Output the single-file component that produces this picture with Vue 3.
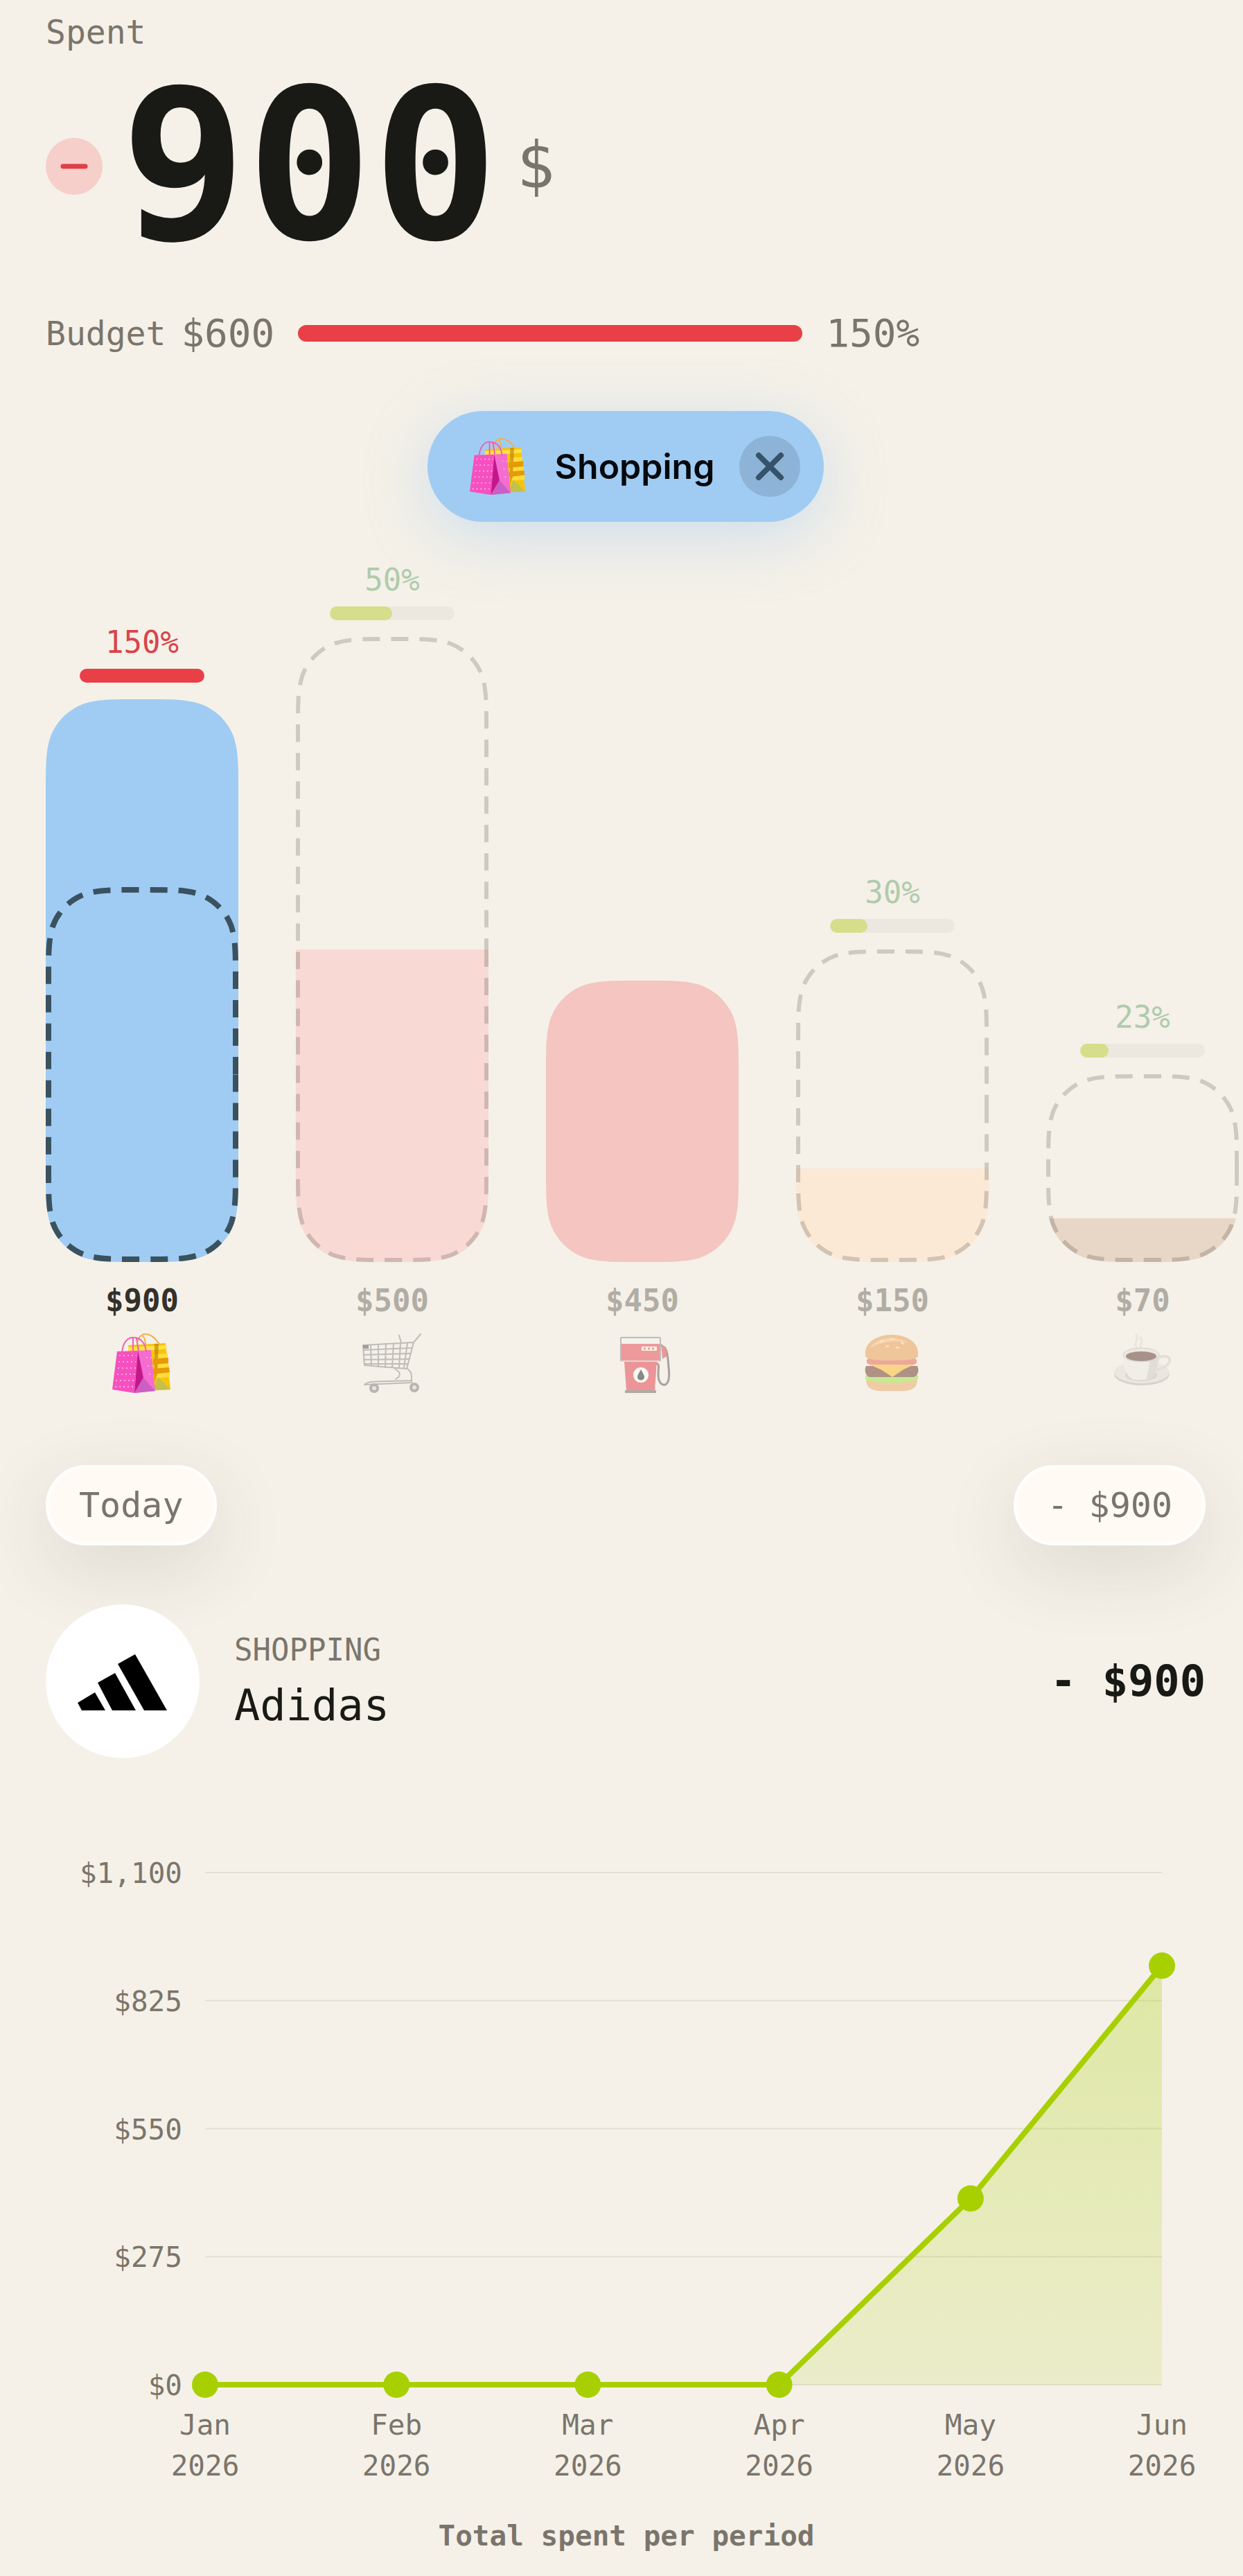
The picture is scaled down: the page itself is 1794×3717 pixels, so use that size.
<template>
  <main class="spending">
    <!-- Emoji-like symbols shared by the filter chip and the columns -->
    <svg class="sprite" aria-hidden="true">
      <symbol id="icon-shopping" viewBox="0 0 88 88">
        <path d="M38 12 C41 0 48 2 49 17 M44 3 C54 -1 64 8 69 17" fill="none" stroke="#efb04a" stroke-width="2" />
        <path d="M24 18 L78 15 L85 82 L40 84 Z" fill="#f6c40b" />
        <path d="M24 21 L62 19 L79 18 L80 23 L62 25 L24 27 Z" fill="#ffe14a" />
        <path d="M62 31 L81 30 L81 36 L62 38 Z M62 45 L82 44 L83 50 L62 52 Z M62 59 L84 57 L84 64 L63 66 Z" fill="#ffdc3a" />
        <path d="M62 16 L68 16 L66 60 L62 70 Z" fill="#b9770a" opacity="0.6" />
        <path d="M60 38 L82 36 L82 44 L60 46 Z M60 52 L83 50 L84 57 L60 60 Z" fill="#e59a08" />
        <path d="M67 64 L85 82 L60 83 Z" fill="#c3c04b" />
        <path d="M8 27 L38 26 L33 87 L1 82 Z" fill="#f650c0" />
        <path d="M38 26 L57 25 L63 84 L33 87 Z" fill="#f46dd0" />
        <path d="M38 26 L46 65 L33 87 Z" fill="#c3188c" />
        <path d="M46 65 L63 84 L33 87 Z" fill="#cb5fc4" />
        <path d="M11 33 H36 M10 42 H35 M9 51 H35 M8 60 H34 M6 69 H33 M5 78 H32 M50 36 H58 M52 48 H59 M54 60 H60" stroke="#ffa6e4" stroke-width="2" stroke-dasharray="2 4" />
        <path d="M15 32 C15 14 24 6 32 7 C42 7 49 15 50 28 M31 32 V8 M36 8 L39 26" fill="none" stroke="#f060b4" stroke-width="2" />
      </symbol>
      <symbol id="icon-groceries" viewBox="0 0 88 88">
        <g fill="none" stroke="#8b8a8c" stroke-linecap="round" stroke-linejoin="round">
          <path d="M2 18 L75 14 L65 52 L4 47 Z M85 2 L75 14 M54 4 L57 14" stroke-width="2" />
          <path d="M3 25 L73 22 M3 32 L71 30 M3 39 L69 38 M4 45 L67 45 M13 18 L14 48 M24 17 L24 49 M35 16 L34 50 M46 16 L44 50 M56 15 L54 51 M66 15 L61 51" stroke-width="2" />
          <path d="M48 52 C58 58 56 63 49 67 M66 52 C73 57 72 62 72 72 M4 75 C10 69 20 71 72 69 M4 75 L72 72" stroke-width="2" />
        </g>
        <path d="M2 18 H10 V23 H2 Z" fill="#505054" />
        <circle cx="18" cy="80" r="5" fill="#d8d8d8" stroke="#7b7a7e" stroke-width="4" />
        <circle cx="76" cy="79" r="5" fill="#d8d8d8" stroke="#7b7a7e" stroke-width="4" />
      </symbol>
      <symbol id="icon-fuel" viewBox="0 0 88 88">
        <path d="M63 44 C70 45 67 50 67 60 C67 73 73 76 77 75 C84 72 83 58 82 50 C81 38 81 28 77 22 L71 18" fill="none" stroke="#57565a" stroke-width="3" />
        <path d="M71 16 L79 24 V34 L73 38 Z" fill="#e2404d" />
        <rect x="13" y="7" width="57" height="34" rx="1" fill="#e84452" stroke="#85898c" stroke-width="2" />
        <rect x="14" y="8" width="55" height="8" fill="#f4f3f1" />
        <rect x="43" y="20" width="22" height="6" fill="#fff2df" />
        <path d="M46 23 H63" stroke="#b06860" stroke-width="3" stroke-dasharray="3 3" />
        <path d="M18 42 H65 L62 83 H21 Z" fill="#e43c4a" />
        <path d="M13 41 H70" stroke="#c3c1be" stroke-width="2" />
        <path d="M19 83 H64 V87 H19 Z" fill="#6c6764" />
        <ellipse cx="42" cy="61" rx="11" ry="11" fill="#fff" />
        <path d="M42 53 C45 59 47 61 47 64 C47 70 37 70 37 64 C37 61 39 59 42 53 Z" fill="#222" />
      </symbol>
      <symbol id="icon-food" viewBox="0 0 88 88">
        <path d="M6 68 C6 78 12 83 25 84 H61 C74 83 80 78 80 68 Z" fill="#eda765" />
        <path d="M5 62 C10 56 76 56 81 62 C82 68 78 71 73 69 C67 75 62 67 57 73 C51 75 48 69 43 73 C37 76 34 69 28 72 C22 75 19 67 13 70 C7 71 4 67 5 62 Z" fill="#98e23e" />
        <path d="M6 48 H80 C83 54 81 63 74 64 H12 C5 63 3 54 6 48 Z" fill="#6b3427" />
        <path d="M6 44 H80 L60 53 L44 64 L27 53 Z" fill="#ffb929" />
        <path d="M10 37 H76 C81 39 80 45 75 46 H11 C6 45 5 39 10 37 Z" fill="#e4624f" />
        <path d="M5 33 C3 12 24 3 43 3 C62 3 83 12 81 33 C81 38 70 40 43 40 C16 40 5 38 5 33 Z" fill="#eb9c4f" />
        <path d="M12 22 C18 8 48 2 68 15 C48 9 28 13 12 22 Z" fill="#f8bd7c" />
        <path d="M27 13 L30 12 M42 9 H45 M57 14 L60 16 M35 20 L38 19 M50 21 L53 22" stroke="#ffe0ad" stroke-width="2" stroke-linecap="round" />
      </symbol>
      <symbol id="icon-coffee" viewBox="0 0 88 88">
        <path d="M36 22 C29 15 40 12 35 3 M43 23 C37 15 47 14 41 7" fill="none" stroke="#dedbd5" stroke-width="3" stroke-linecap="round" />
        <ellipse cx="43" cy="60" rx="40" ry="16" fill="#bbb6ad" />
        <ellipse cx="43" cy="57" rx="40" ry="16" fill="#e2dfd9" />
        <ellipse cx="42" cy="61" rx="23" ry="9" fill="#c4bfb5" />
        <path d="M65 36 C83 30 88 39 79 47 C74 51 68 53 63 54" fill="none" stroke="#d5d1ca" stroke-width="4" />
        <path d="M15 32 C16 51 22 67 34 68 H49 C61 67 67 51 68 32 Z" fill="#efede9" />
        <path d="M56 36 L68 33 C67 51 60 67 49 68 Z" fill="#d0ccc4" />
        <ellipse cx="42" cy="32" rx="26" ry="10" fill="#e3e0db" stroke="#bbb7af" stroke-width="1" />
        <ellipse cx="42" cy="34" rx="22" ry="7" fill="#59362b" />
      </symbol>
    </svg>

    <header>
      <p class="label">Spent</p>
      <div class="total">
        <svg class="total-sign" viewBox="0 0 82 82" role="img" aria-label="minus">
          <circle cx="41" cy="41" r="41" fill="#f6ceca" />
          <path d="M25 41 H57" stroke="#df3f48" stroke-width="7" stroke-linecap="round" />
        </svg>
        <strong class="total-value">900</strong>
        <span class="total-currency">$</span>
      </div>
      <div class="budget">
        <span class="label">Budget</span>
        <span class="budget-value">$600</span>
        <div class="budget-track"></div>
        <span class="budget-value">150%</span>
      </div>
    </header>

    <div class="chip">
      <svg class="chip-icon" aria-hidden="true"><use href="#icon-shopping" /></svg>
      <span>Shopping</span>
      <button type="button" class="chip-close" aria-label="Clear filter">
        <svg viewBox="0 0 88 88" aria-hidden="true">
          <path d="M28 28 L60 60 M60 28 L28 60" stroke="#35536a" stroke-width="8" stroke-linecap="round" />
        </svg>
      </button>
    </div>

    <ul class="columns">
      <li
        v-for="item in columns"
        :key="item.id"
        class="column"
        :class="{ 'column--active': item.id === selected }"
      >
        <template v-if="item.budget">
          <span class="column-percent">{{ item.percent }}%</span>
          <div class="column-track">
            <div class="column-progress" :style="{ width: Math.min(item.percent, 100) + '%' }"></div>
          </div>
        </template>
        <svg
          class="column-bar"
          :viewBox="'0 0 ' + barWidth + ' ' + item.height"
          :style="{ height: item.height + 'px' }"
          aria-hidden="true"
        >
          <clipPath :id="'clip-' + item.id">
            <path :d="item.shape" />
          </clipPath>
          <rect
            :y="item.height - item.fillHeight"
            :width="barWidth"
            :height="item.fillHeight"
            :fill="item.color"
            :clip-path="'url(#clip-' + item.id + ')'"
          />
          <path v-if="item.budget" :d="item.outline" class="column-outline" />
        </svg>
        <span class="column-amount">${{ item.spent }}</span>
        <svg class="column-icon" aria-hidden="true"><use :href="'#icon-' + item.id" /></svg>
      </li>
    </ul>

    <section>
      <div class="day">
        <span class="pill">Today</span>
        <span class="pill">- $900</span>
      </div>
      <article class="transaction">
        <svg class="merchant" viewBox="0 0 222 222" role="img" aria-label="Adidas logo">
          <circle cx="111" cy="111" r="111" fill="#fff" />
          <path d="M46 142 L71 127 L86 153 H52 Z M75 113 L100 99 L130 153 H96 Z M104 86 L129 72 L175 153 H142 Z" />
        </svg>
        <div class="transaction-name">
          <span class="transaction-category">SHOPPING</span>
          <span>Adidas</span>
        </div>
        <strong>- $900</strong>
      </article>
    </section>

    <svg class="trend" viewBox="0 0 1674 1032" role="img" aria-label="Total spent per period">
      <defs>
        <linearGradient id="trend-fill" x1="0" y1="0" x2="0" y2="1">
          <stop offset="0" stop-color="#a8d000" stop-opacity="0.29" />
          <stop offset="1" stop-color="#a8d000" stop-opacity="0.13" />
        </linearGradient>
      </defs>
      <g v-for="tick in ticks" :key="tick.label">
        <line :x1="plot.left" :x2="plot.right" :y1="tick.y" :y2="tick.y" class="trend-grid" />
        <text :x="plot.left - 33" :y="tick.y + 15" text-anchor="end">{{ tick.label }}</text>
      </g>
      <path :d="area" fill="url(#trend-fill)" />
      <polyline :points="line" class="trend-line" />
      <g v-for="point in points" :key="point.month">
        <circle :cx="point.x" :cy="point.y" r="19" class="trend-dot" />
        <text :x="point.x" y="852" text-anchor="middle">{{ point.month }}</text>
        <text :x="point.x" y="911" text-anchor="middle">2026</text>
      </g>
      <text x="838" y="1012" text-anchor="middle" class="trend-title">Total spent per period</text>
    </svg>
  </main>
</template>

<script setup>
import { computed, ref } from 'vue'

const selected = ref('shopping')

const barWidth = 278
const cornerRadius = 87
const tallest = 902

const categories = [
  { id: 'shopping', spent: 900, budget: 600, color: '#a0ccf3' },
  { id: 'groceries', spent: 500, budget: 1000, color: '#f8d9d4' },
  { id: 'fuel', spent: 450, budget: 0, color: '#f4c5c1' },
  { id: 'food', spent: 150, budget: 500, color: '#fbe8d5' },
  { id: 'coffee', spent: 70, budget: 300, color: '#e8d6c6' }
]

// Rounded rect with continuous corners, drawn clockwise from the middle of the right edge
function smoothRect(x, y, w, h, r) {
  const corners = [
    [x + w, y + h, 0, -1, -1, 0],
    [x, y + h, 1, 0, 0, -1],
    [x, y, 0, 1, 1, 0],
    [x + w, y, -1, 0, 0, 1]
  ]
  let d = `M${x + w} ${y + h / 2}`
  for (const [cx, cy, ax, ay, bx, by] of corners) {
    const at = (a, b) => `${cx + r * (a * ax + b * bx)} ${cy + r * (a * ay + b * by)}`
    d += ` L${at(1.529, 0)}`
    d += ` C${at(1.088, 0)} ${at(0.868, 0)} ${at(0.631, 0.075)}`
    d += ` C${at(0.373, 0.169)} ${at(0.169, 0.373)} ${at(0.075, 0.631)}`
    d += ` C${at(0, 0.868)} ${at(0, 1.088)} ${at(0, 1.529)}`
  }
  return d + 'Z'
}

const columns = computed(() => {
  const scale = tallest / Math.max(...categories.map(c => Math.max(c.spent, c.budget)))
  return categories.map(c => {
    const height = Math.round(Math.max(c.spent, c.budget) * scale)
    const budgetHeight = Math.round(c.budget * scale)
    const inset = c.id === selected.value ? 4 : 3
    return {
      ...c,
      height,
      fillHeight: Math.round(c.spent * scale),
      percent: Math.round(c.spent / c.budget * 100),
      shape: smoothRect(0, 0, barWidth, height, cornerRadius),
      outline: smoothRect(
        inset,
        height - budgetHeight + inset,
        barWidth - inset * 2,
        budgetHeight - inset * 2,
        cornerRadius - inset
      )
    }
  })
})

const plot = { left: 230, right: 1611, top: 41, bottom: 780, max: 1100 }

const yFor = value => plot.bottom - value / plot.max * (plot.bottom - plot.top)

const ticks = [1100, 825, 550, 275, 0].map(value => ({
  label: '$' + value.toLocaleString('en-US'),
  y: yFor(value)
}))

const history = [
  { month: 'Jan', value: 0 },
  { month: 'Feb', value: 0 },
  { month: 'Mar', value: 0 },
  { month: 'Apr', value: 0 },
  { month: 'May', value: 400 },
  { month: 'Jun', value: 900 }
]

const points = history.map((entry, i) => ({
  ...entry,
  x: plot.left + i * (plot.right - plot.left) / (history.length - 1),
  y: yFor(entry.value)
}))

const line = points.map(p => p.x + ',' + p.y).join(' ')
const area = `M${line.replaceAll(' ', ' L')} V${plot.bottom} H${plot.left} Z`
</script>

<style>
body {
  background: #f5f1e8;
}
</style>

<style scoped>
.spending {
  padding: 16px 54px 23px 66px;
  overflow: hidden;
  background: #f5f1e8;
  color: #191a16;
  font-family: "DejaVu Sans Mono", "Liberation Mono", monospace;
}

.sprite {
  position: absolute;
  width: 0;
  height: 0;
}

/* Header */
.label {
  margin: 0;
  font-size: 48px;
  line-height: 60px;
  color: #7a756c;
}

.total {
  display: flex;
  align-items: center;
  gap: 26px;
  height: 240px;
  margin-top: 44px;
}

.total-sign {
  width: 82px;
  height: 82px;
}

.total-value {
  font-size: 302px;
  line-height: 240px;
}

.total-currency {
  font-size: 92px;
  line-height: 96px;
  color: #7a756c;
}

.budget {
  display: flex;
  align-items: center;
  margin-top: 89px;
  line-height: 64px;
}

.budget-value {
  margin-left: 22px;
  font-size: 56px;
  line-height: 64px;
  color: #7a756c;
}

.budget-track {
  flex: 0 1 728px;
  height: 24px;
  margin: 0 12px 0 34px;
  border-radius: 12px;
  background: #e84046;
}

/* Filter chip */
.chip {
  display: flex;
  align-items: center;
  width: max-content;
  height: 160px;
  box-sizing: border-box;
  margin: 80px auto 0;
  padding: 0 34px 0 60px;
  border-radius: 80px;
  background: #a0ccf3;
  box-shadow: 0 20px 90px rgba(150, 196, 246, 0.42);
  color: #05080c;
  font-family: Inter, "Liberation Sans", sans-serif;
  font-size: 50px;
  font-weight: 600;
}

.chip-icon {
  width: 84px;
  height: 84px;
  margin-right: 40px;
}

.chip-close {
  width: 88px;
  height: 88px;
  margin-left: 36px;
  padding: 0;
  border: 0;
  border-radius: 50%;
  background: #8db3d6;
}

.chip-close svg {
  display: block;
}

/* Category columns */
.columns {
  display: flex;
  align-items: flex-end;
  gap: 83px;
  margin: 58px -54px 0 0;
  padding: 0;
  overflow-x: auto;
  scrollbar-width: none;
  list-style: none;
}

.column {
  display: flex;
  flex: 0 0 278px;
  flex-direction: column;
  align-items: center;
  color: #b1ada5;
  font-size: 44px;
  line-height: 52px;
}

.column-percent {
  color: #b0cbac;
}

.column-track {
  width: 180px;
  height: 20px;
  margin: 12px 0 24px;
  border-radius: 10px;
  background: #ece8e0;
}

.column-progress {
  height: 100%;
  border-radius: 10px;
  background: #d6de8b;
}

.column-bar {
  display: block;
  width: 278px;
}

.column-outline {
  fill: none;
  stroke: rgba(26, 28, 22, 0.18);
  stroke-width: 6;
  stroke-dasharray: 25 16;
}

.column-amount {
  margin-top: 30px;
  font-weight: 700;
}

.column-icon {
  width: 88px;
  height: 88px;
  margin-top: 20px;
  opacity: 0.5;
}

.column--active {
  color: #34302b;
}

.column--active .column-percent {
  color: #d9434b;
}

.column--active .column-progress {
  background: #e84046;
}

.column--active .column-outline {
  stroke: #3a5260;
  stroke-width: 8;
}

.column--active .column-icon {
  opacity: 1;
}

/* Transactions */
.day {
  display: flex;
  justify-content: space-between;
  margin-top: 103px;
}

.pill {
  padding: 0 43px;
  border: 5px solid #fffefc;
  border-radius: 58px;
  background: #fffaf3;
  box-shadow: 0 32px 110px rgba(60, 54, 46, 0.13);
  color: #7a756c;
  font-size: 50px;
  line-height: 106px;
  white-space: pre;
}

.transaction {
  display: flex;
  position: relative;
  align-items: center;
  gap: 50px;
  margin-top: 85px;
  font-size: 62px;
  line-height: 80px;
}

.merchant {
  width: 222px;
  height: 222px;
}

.transaction-name {
  display: flex;
  flex: 1;
  flex-direction: column;
  padding-bottom: 10px;
}

.transaction-category {
  font-size: 44px;
  color: #7a756c;
}

/* Trend chart */
.trend {
  display: block;
  width: 100%;
  margin-top: 124px;
  overflow: visible;
}

.trend text {
  fill: #7a756c;
  font-size: 41px;
}

.trend .trend-title {
  font-weight: 700;
}

.trend-grid {
  stroke: #e3dfd3;
  stroke-width: 2;
}

.trend-line {
  fill: none;
  stroke: #a8d000;
  stroke-width: 8;
  stroke-linejoin: round;
}

.trend-dot {
  fill: #a8d000;
}
</style>
